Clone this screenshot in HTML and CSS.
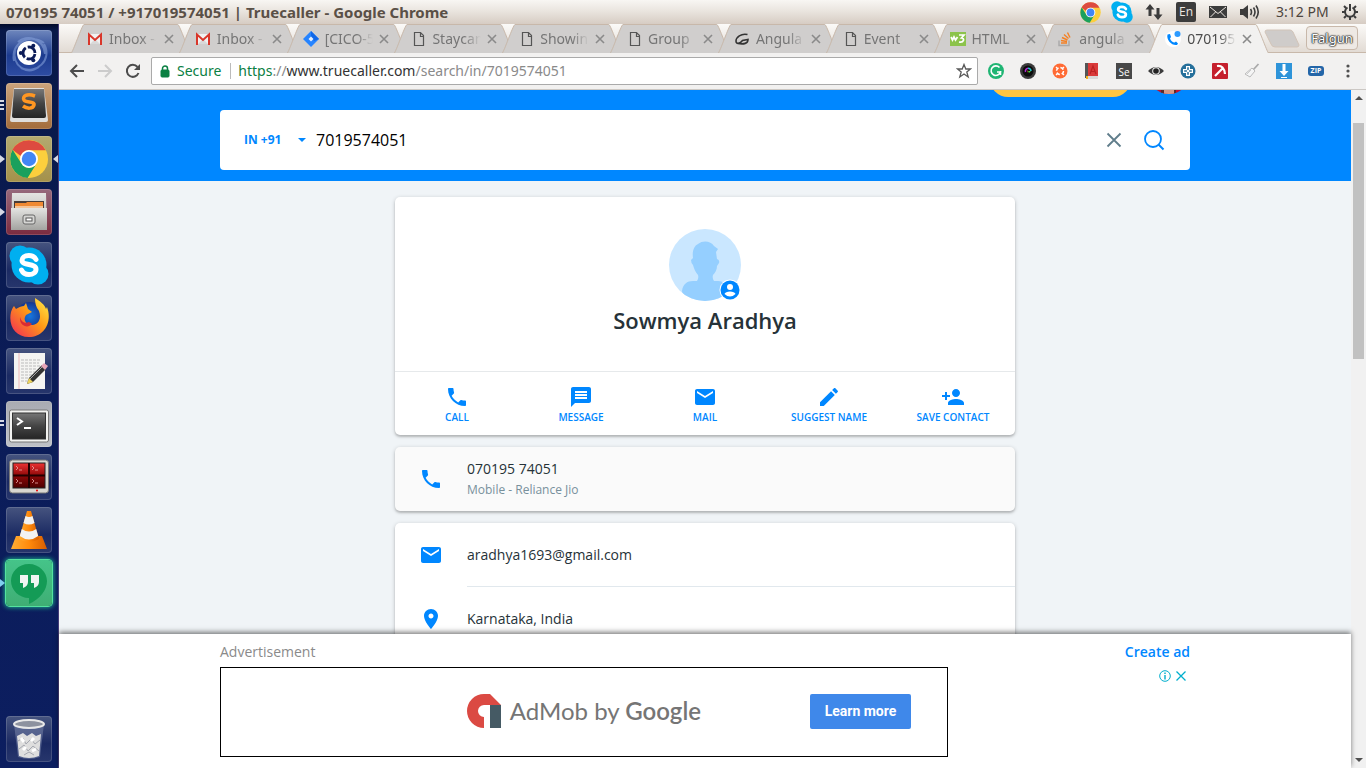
FILE: index.html
```
<!DOCTYPE html>
<html lang="en">
<head>
<meta charset="utf-8">
<title>070195 74051 / +917019574051 | Truecaller</title>
<link rel="stylesheet" href="styles.css">
</head>
<body>
<svg class="defs" aria-hidden="true">
  <defs>
    <linearGradient id="gGrey" x1="0" y1="0" x2="0" y2="1"><stop offset="0" stop-color="#e4e4e2"/><stop offset="1" stop-color="#a3a3a0"/></linearGradient>
    <linearGradient id="gDark" x1="0" y1="0" x2="0" y2="1"><stop offset="0" stop-color="#777"/><stop offset=".5" stop-color="#444"/><stop offset="1" stop-color="#252525"/></linearGradient>
    <linearGradient id="gRed" x1="0" y1="0" x2="0" y2="1"><stop offset="0" stop-color="#e33"/><stop offset=".5" stop-color="#8d0808"/><stop offset="1" stop-color="#4c0000"/></linearGradient>
    <linearGradient id="gFox" x1="1" y1="0" x2="0" y2="1"><stop offset="0" stop-color="#fff04a"/><stop offset=".45" stop-color="#ff9a16"/><stop offset="1" stop-color="#f0245a"/></linearGradient>
    <radialGradient id="gGlobe"><stop offset="0" stop-color="#1677e0"/><stop offset="1" stop-color="#15358f"/></radialGradient>
    <linearGradient id="gCone" x1="0" y1="0" x2="1" y2="0"><stop offset="0" stop-color="#ffae35"/><stop offset=".5" stop-color="#ff8a0c"/><stop offset="1" stop-color="#d55c00"/></linearGradient>
  </defs>
  <symbol id="chrome" viewBox="0 0 40 40">
    <circle cx="20" cy="20" r="19.500" fill="#fccf3d"/>
    <path d="M3 10.500A19.500 19.500 0 0 1 37 10.800L37 11H20A9 9 0 0 0 11.500 17Z" fill="#dd4b40"/>
    <path d="M3.200 10.500A19.500 19.500 0 0 0 18.500 39.500L27.500 25A9 9 0 0 1 12.200 24.500Z" fill="#1aa05d"/>
    <circle cx="20" cy="20" r="9.200" fill="#fff"/><circle cx="20" cy="20" r="7.400" fill="#4286f5"/>
  </symbol>
  <symbol id="skype" viewBox="0 0 40 40">
    <circle cx="20" cy="20" r="17.500" fill="#00aff0"/><circle cx="11" cy="11" r="10.500" fill="#00aff0"/><circle cx="29" cy="29" r="10.500" fill="#00aff0"/>
    <path d="M27 14.500C25.500 11.500 23 10.500 19.800 10.500C15.500 10.500 13 12.600 13 15.300C13 21.300 27 17.800 27 24.200C27 27.500 24 29.500 20 29.500C16.300 29.500 13.800 28 12.500 25" fill="none" stroke="#fff" stroke-width="5" stroke-linecap="round"/>
  </symbol>
  <symbol id="gmail" viewBox="0 0 16 16"><path d="M1 3H15V13H1Z" fill="#f1f1f1"/><path d="M3 13L8 8L13 13Z" fill="#d9d9d9"/><path d="M2 14V3.500L8 9L14 3.500V14" fill="none" stroke="#d9372b" stroke-width="2"/></symbol>
  <symbol id="file" viewBox="0 0 16 16"><path d="M4.500 1.500H10.500L13.500 4.500V14.500H4.500ZM10.500 1.500V5.500H13.500" fill="none" stroke="#555" stroke-width="1.200"/></symbol>
  <symbol id="x" viewBox="0 0 10 10"><path d="M1 1L9 9M9 1L1 9" stroke="currentColor" stroke-width="1.600"/></symbol>
  <symbol id="tabshape" viewBox="0 0 120 29" preserveAspectRatio="none"><path d="M0 29.500C2 28 11 1 13 .5H107C109 1 118 28 120 29.500" fill="currentColor" stroke="#c8b8aa"/></symbol>
  <symbol id="phone" viewBox="0 0 24 24"><path fill="currentColor" d="M6.620 10.790c1.440 2.830 3.760 5.140 6.590 6.590l2.200-2.200c.27-.27.670-.36 1.020-.24 1.120.37 2.330.57 3.570.57.550 0 1 .45 1 1V20c0 .55-.45 1-1 1-9.390 0-17-7.610-17-17 0-.55.45-1 1-1h3.500c.55 0 1 .45 1 1 0 1.250.2 2.450.57 3.570.11.35.03.74-.25 1.020l-2.200 2.200z"/></symbol>
  <symbol id="mail" viewBox="0 0 24 24"><path fill="currentColor" d="M20 4H4c-1.100 0-1.990.9-1.990 2L2 18c0 1.100.9 2 2 2h16c1.100 0 2-.9 2-2V6c0-1.100-.9-2-2-2zm0 4l-8 5-8-5V6l8 5 8-5v2z"/></symbol>
</svg>

<header class="panel">
  <h1 class="panel-title">070195 74051 / +917019574051 | Truecaller - Google Chrome</h1>
  <div class="indicators">
    <span class="ind"><svg width="21" height="21"><use href="#chrome"/></svg></span>
    <span class="ind"><svg width="22" height="22"><use href="#skype"/></svg></span>
    <span class="ind"><svg width="18" height="18" viewBox="0 0 18 18"><path d="M5 1L0.500 6.500H3.500V13H6.500V6.500H9.500ZM13 17L8.500 11.500H11.500V5H14.500V11.500H17.500Z" fill="#3c3c3c"/></svg></span>
    <span class="ind"><span class="lang">En</span></span>
    <span class="ind"><svg width="18" height="12" viewBox="0 0 18 12"><rect width="18" height="12" fill="#3c3c3c"/><path d="M1 1L9 7.500L17 1M1.500 11L6.500 6M16.500 11L11.500 6" fill="none" stroke="#eee8e2"/></svg></span>
    <span class="ind"><svg width="20" height="16" viewBox="0 0 20 16"><path d="M0 5H3L8 1V15L3 11H0Z" fill="#3c3c3c"/><path d="M10.500 5Q12.500 8 10.500 11M13.500 3.500Q16.500 8 13.500 12.500M16 1.500Q20.500 8 16 14.500" fill="none" stroke="#3c3c3c" stroke-width="1.600"/></svg></span>
    <time class="clock">3:12 PM</time>
    <span class="ind"><svg width="18" height="18" viewBox="0 0 18 18"><path d="M6.500 4.500A5 5 0 1 0 11.500 4.500" fill="none" stroke="#3c3c3c" stroke-width="2"/><path d="M9 1V8M1 9H4M14 9H17M3 3L5 5M15 3L13 5M3 15L5 13M15 15L13 13M9 14V17" stroke="#3c3c3c" stroke-width="2"/></svg></span>
  </div>
</header>

<div class="desktop">
  <nav class="dock" aria-label="Launcher">
    <button class="app ubuntu" aria-label="Dash"><svg viewBox="0 0 46 46"><path d="M8 31C4 12 25 3 38 13M38 14C47 30 30 45 15 38M12 12C20 4 38 8 39 24M33 37C20 46 6 35 9 20" fill="none" stroke="#8ba5df" stroke-width="2" opacity=".55"/><circle cx="23" cy="23" r="12" fill="#fff"/><circle cx="23" cy="23" r="6" fill="none" stroke="#0c1c58" stroke-width="2.800" stroke-dasharray="10.600 2" stroke-dashoffset="-1"/><circle cx="14.800" cy="23" r="2" fill="#0c1c58"/><circle cx="27.300" cy="15.800" r="2" fill="#0c1c58"/><circle cx="27.300" cy="30.200" r="2" fill="#0c1c58"/></svg></button>
    <button class="app sublime" aria-label="Sublime Text"><span class="mark-lines three"></span><svg viewBox="0 0 46 46"><path d="M8 5H38L42 37Q42 39 40 39H6Q4 39 4 37Z" fill="#dfdedc"/><path d="M8 6H38L40 33Q40 35 38 35H8Q6 35 6 33Z" fill="url(#gDark)"/><path d="M29 13C21 10 16 13 18 17C20 20 29 18 28 22C27 26 21 26 17 23" fill="none" stroke="#ff9722" stroke-width="3.500"/></svg></button>
    <button class="app chrome" aria-label="Google Chrome"><span class="mark-left"></span><span class="mark-right"></span><svg viewBox="0 0 46 46"><use href="#chrome" x="3.500" y="3.500" width="39" height="39"/></svg></button>
    <button class="app files" aria-label="Files"><span class="mark-left"></span><svg viewBox="0 0 46 46"><path d="M6 4H40L41 41H5Z" fill="url(#gGrey)"/><path d="M8 12H38V20H8Z" fill="#4a3d38"/><path d="M9 14L20 14L21 13H37V20H9Z" fill="#f08a34"/><path d="M9 17H37V20H9Z" fill="#f5c498"/><path d="M5 19H41V41H5Z" fill="url(#gGrey)"/><rect x="17" y="26" width="12" height="9" rx="2" fill="#d5d5d3" stroke="#666"/><rect x="20" y="29" width="6" height="3" fill="#fff" stroke="#555"/></svg></button>
    <button class="app" aria-label="Skype"><svg viewBox="0 0 46 46"><use href="#skype" x="3" y="3" width="40" height="40"/></svg></button>
    <button class="app" aria-label="Firefox"><svg viewBox="0 0 46 46"><circle cx="24" cy="21" r="14" fill="url(#gGlobe)"/><path d="M5 17C6 14 7 12 8 11L10 14C13 12 16 11 18 11L20 8L22 14L26 17L20 20C17 24 19 29 25 30C32 30 36 24 33 16C31 13 29 10 29 3C34 6 39 10 40 14L41 12C47 28 37 42 23 42C9 42 2 30 5 17Z" fill="url(#gFox)"/><path d="M14 22C15 27 19 29 23 27L26 29C22 34 13 31 14 22Z" fill="#d92b34"/></svg></button>
    <button class="app" aria-label="Text Editor"><svg viewBox="0 0 46 46"><rect x="8" y="5" width="31" height="36" fill="#f4f4f2"/><path d="M13 5V41" stroke="#edb9b9"/><path d="M15 12H35M15 15H33M15 18H35M15 21H31M15 24H34M15 27H29M15 30H30M15 33H23" stroke="#bbb" stroke-dasharray="3 1"/><path d="M21 36L23 30L36 17L40 21L27 34Z" fill="#333"/><path d="M24 31L36 19" stroke="#aaa"/><path d="M35 18L38 15L42 18L39 22Z" fill="#e7a5b8"/><path d="M21 36L23 30L27 34Z" fill="#ead25c"/></svg></button>
    <button class="app terminal" aria-label="Terminal"><span class="mark-lines two"></span><svg viewBox="0 0 46 46"><rect x="3.500" y="9" width="39" height="32" rx="2" fill="#f2f2f0" stroke="#777"/><rect x="6.500" y="12" width="33" height="26" fill="url(#gDark)" stroke="#333"/><path d="M11 17L16 20.500L11 24" fill="none" stroke="#fff" stroke-width="2"/><path d="M18 27H25" stroke="#fff" stroke-width="2"/></svg></button>
    <button class="app" aria-label="Terminator"><svg viewBox="0 0 46 46"><rect x="3.500" y="6" width="39" height="33" rx="3" fill="#d9d7d0" stroke="#777"/><rect x="7" y="9" width="32" height="25" fill="url(#gRed)" stroke="#222"/><path d="M23 9V34M7 21.500H39" stroke="#200" stroke-width="2"/><path d="M10 12L12 14L10 16M13 16H16M26 12L28 14L26 16M29 16H32M10 25L12 27L10 29M13 29H16M26 25L28 27L26 29M29 29H32" fill="none" stroke="#eaa" stroke-width=".8"/><circle cx="31" cy="36.500" r="1" fill="#e00"/></svg></button>
    <button class="app" aria-label="VLC"><svg viewBox="0 0 46 46"><path d="M10 29H36L41 42H5Z" fill="url(#gCone)"/><path d="M21 4H25L33 32Q23 38 13 32Z" fill="url(#gCone)"/><path d="M19.500 9Q23 11 26.500 9L28.500 16Q23 19 17.500 16ZM15.800 22Q23 27 30.200 22L32.200 29Q23 36 13.800 29Z" fill="#f2f2f2"/></svg></button>
    <button class="app hangouts" aria-label="Hangouts"><span class="mark-left"></span><svg viewBox="0 0 46 46"><path d="M23 4C12 4 5 12 5 21C5 30 13 38 23 38V44C34 39 41 30 41 21C41 12 33 4 23 4Z" fill="#149b56"/><path d="M14 15H22V22C22 25 20 27 17 28V23H14ZM25 15H33V22C33 25 31 27 28 28V23H25Z" fill="#f2f5f3"/></svg></button>
    <button class="app trash" aria-label="Trash"><svg viewBox="0 0 46 46"><path d="M8 8L12 41Q23 45 34 41L38 8Z" fill="#8995b5" opacity=".45"/><path d="M11 20L17 17L21 20L26 17L30 20L35 18L33 40Q23 44 13 40Z" fill="#dedede"/><path d="M12 25L17 22L20 28L25 23L29 28L34 24M13 33L18 29L22 35L27 30L33 35M18 39L23 36L28 39" fill="none" stroke="#a5a8b0"/><path d="M15 22L18 26M25 25L28 22M17 34L20 31M26 35L30 33" stroke="#fff" stroke-width="3"/><ellipse cx="23" cy="8" rx="15" ry="4" fill="#8d929f" stroke="#e9e9e9" stroke-width="2"/></svg></button>
  </nav>

  <main class="browser">
    <div class="tabstrip">
      <div class="tabs">
        <div class="tab"><svg class="tab-bg"><use href="#tabshape"/></svg><svg class="fav"><use href="#gmail"/></svg><span class="tab-title">Inbox - f</span><button class="tab-x" aria-label="Close tab"><svg><use href="#x"/></svg></button></div>
        <div class="tab"><svg class="tab-bg"><use href="#tabshape"/></svg><svg class="fav"><use href="#gmail"/></svg><span class="tab-title">Inbox - f</span><button class="tab-x" aria-label="Close tab"><svg><use href="#x"/></svg></button></div>
        <div class="tab"><svg class="tab-bg"><use href="#tabshape"/></svg><svg class="fav" viewBox="0 0 16 16"><path d="M8 0L16 8L8 16L0 8Z" fill="#2684ff"/><path d="M8 0L16 8L11 10L8 5Z" fill="#1168e8"/><path d="M8 5.500L10.500 8L8 10.500L5.500 8Z" fill="#e6effc"/></svg><span class="tab-title">[CICO-5]</span><button class="tab-x" aria-label="Close tab"><svg><use href="#x"/></svg></button></div>
        <div class="tab"><svg class="tab-bg"><use href="#tabshape"/></svg><svg class="fav"><use href="#file"/></svg><span class="tab-title">Staycan</span><button class="tab-x" aria-label="Close tab"><svg><use href="#x"/></svg></button></div>
        <div class="tab"><svg class="tab-bg"><use href="#tabshape"/></svg><svg class="fav"><use href="#file"/></svg><span class="tab-title">Showin</span><button class="tab-x" aria-label="Close tab"><svg><use href="#x"/></svg></button></div>
        <div class="tab"><svg class="tab-bg"><use href="#tabshape"/></svg><svg class="fav"><use href="#file"/></svg><span class="tab-title">Group</span><button class="tab-x" aria-label="Close tab"><svg><use href="#x"/></svg></button></div>
        <div class="tab"><svg class="tab-bg"><use href="#tabshape"/></svg><svg class="fav" viewBox="0 0 16 16"><path d="M13.500 3.500C7 2 2 6.500 2 10C2 13.500 6 13 8.500 9.500L14 8.500C14 12.500 10 13.500 4 12.500" fill="none" stroke="#333" stroke-width="1.600"/></svg><span class="tab-title">Angula</span><button class="tab-x" aria-label="Close tab"><svg><use href="#x"/></svg></button></div>
        <div class="tab"><svg class="tab-bg"><use href="#tabshape"/></svg><svg class="fav"><use href="#file"/></svg><span class="tab-title">Event</span><button class="tab-x" aria-label="Close tab"><svg><use href="#x"/></svg></button></div>
        <div class="tab"><svg class="tab-bg"><use href="#tabshape"/></svg><svg class="fav" viewBox="0 0 16 16"><rect y="1" width="16" height="14" fill="#8cc34b"/><path d="M1 6L2.500 9L4 6L5.500 9L7.500 6M9 4H14L11.500 7C15 7 14 12 9 11" fill="none" stroke="#fff" stroke-width="1.700"/></svg><span class="tab-title">HTML</span><button class="tab-x" aria-label="Close tab"><svg><use href="#x"/></svg></button></div>
        <div class="tab"><svg class="tab-bg"><use href="#tabshape"/></svg><svg class="fav" viewBox="0 0 16 16"><path d="M2 9.500V14.500H12V9.500" fill="none" stroke="#aaa" stroke-width="1.500"/><path d="M4 12H10M4 9.500L10 10.500M5 6.500L10.500 9M7 3.500L11.500 7.500M10.500 1.500L13 6.500" stroke="#f48024" stroke-width="1.400"/></svg><span class="tab-title">angula</span><button class="tab-x" aria-label="Close tab"><svg><use href="#x"/></svg></button></div>
        <div class="tab active"><svg class="tab-bg"><use href="#tabshape"/></svg><svg class="fav" viewBox="0 0 16 16"><circle cx="8" cy="8" r="8" fill="#fff"/><path d="M2.500 3.500L5 3L6 6L5 7.500C6 10 8 11.500 9.500 11.500L11 10.500L13 12.500L12 14C7 15 1 9 2.500 3.500Z" fill="#0087ff"/><circle cx="12.500" cy="3" r="3" fill="#2d9bff"/></svg><span class="tab-title">070195</span><button class="tab-x" aria-label="Close tab"><svg><use href="#x"/></svg></button></div>
      </div>
      <button class="new-tab" aria-label="New tab"><svg width="36" height="19" viewBox="0 0 36 19"><path d="M3 1H26Q28 1 29 3L35 16Q35 18 33 18H11Q8 18 7 15L1 3Q1 1 3 1Z" fill="#cfccca" stroke="#d2c4b8"/></svg></button>
      <button class="profile">Falgun</button>
    </div>

    <div class="toolbar">
      <button class="nav" aria-label="Back"><svg viewBox="0 0 16 16"><path d="M15 8H2M8 2L2 8L8 14" fill="none" stroke="#4c4c4c" stroke-width="2"/></svg></button>
      <button class="nav" aria-label="Forward"><svg viewBox="0 0 16 16"><path d="M1 8H14M8 2L14 8L8 14" fill="none" stroke="#ccc" stroke-width="2"/></svg></button>
      <button class="nav" aria-label="Reload"><svg viewBox="0 0 16 16"><path d="M13.500 10A6 6 0 1 1 12.500 4" fill="none" stroke="#4c4c4c" stroke-width="2"/><path d="M15 1V7H9Z" fill="#4c4c4c"/></svg></button>
      <div class="omnibox">
        <svg width="10" height="13" viewBox="0 0 10 13"><rect x="1" y="5" width="8" height="7" rx="1" fill="#0b8043" stroke="#0b8043"/><path d="M2.500 6V3.500A2.500 2.500 0 0 1 7.500 3.500V6" fill="none" stroke="#0b8043" stroke-width="1.500"/></svg>
        <span class="secure">Secure</span>
        <span class="url"><span class="scheme">https</span>://<span class="host">www.truecaller.com</span>/search/in/7019574051</span>
        <button class="star" aria-label="Bookmark"><svg width="16" height="16" viewBox="0 0 16 16"><path d="M8 1.500L9.800 6H14.500L10.800 9L12.200 14L8 11L3.800 14L5.200 9L1.500 6H6.200Z" fill="none" stroke="#5a5a5a" stroke-width="1.300"/></svg></button>
      </div>
      <div class="extensions">
        <button class="ext" aria-label="Grammarly"><svg viewBox="0 0 16 16"><circle cx="8" cy="8" r="8" fill="#1fb573"/><path d="M11.500 4.500A4.800 4.800 0 1 0 12.500 9H9M12.500 8V12" fill="none" stroke="#fff" stroke-width="1.600"/></svg></button>
        <button class="ext" aria-label="Camera"><svg viewBox="0 0 16 16"><circle cx="8" cy="8" r="8" fill="#3a3a3a"/><circle cx="8" cy="8" r="5.500" fill="#0c0c0c"/><path d="M5.500 9A3 3 0 0 1 8 5.200" stroke="#b02bd0" stroke-width="1.500" fill="none"/><path d="M8 5.200A3 3 0 0 1 11 8" stroke="#21c5ce" stroke-width="1.500" fill="none"/><path d="M8 8H11L9 10Z" fill="#48d33e"/><path d="M7 7L8 8V10Z" fill="#e63"/></svg></button>
        <button class="ext" aria-label="Helper"><svg viewBox="0 0 16 16"><circle cx="8" cy="8" r="7.500" fill="#ff6b35"/><circle cx="8" cy="8" r="3.500" fill="none" stroke="#fff" stroke-width="1.500" stroke-dasharray="3.500 2"/><path d="M4 4L6 6M12 4L10 6M4 12L6 10M12 12L10 10" stroke="#fff" stroke-width="1.300"/><circle cx="8" cy="8" r="2" fill="#ff6b35"/></svg></button>
        <button class="ext" aria-label="Dictionary"><svg viewBox="0 0 16 16"><path d="M1 0H14V14H1Z" fill="#d93a3a"/><path d="M1 0H4V15H1Z" fill="#555"/><path d="M3 13H14V16H3Z" fill="#d9d9d9"/><path d="M6 11L9 3L12 11M7.500 8.500H11" fill="none" stroke="#b22" stroke-width="1.200"/><path d="M2 13H4V16H2Z" fill="#f5b31c"/></svg></button>
        <button class="ext se" aria-label="Selenium">Se</button>
        <button class="ext" aria-label="Eye"><svg viewBox="0 0 16 16"><path d="M0 8Q8 0 16 8Q8 16 0 8Z" fill="#3c3c3c"/><circle cx="8" cy="8" r="3.800" fill="#eee"/><circle cx="8" cy="8" r="2.800" fill="#222"/></svg></button>
        <button class="ext" aria-label="Target"><svg viewBox="0 0 16 16"><circle cx="8" cy="8" r="7.500" fill="#26709b"/><path d="M6 3H10V6H13V10H10V13H6V10H3V6H6Z" fill="#fff"/><path d="M7.200 4.200H8.800V7.200H11.800V8.800H8.800V11.800H7.200V8.800H4.200V7.200H7.200Z" fill="#26709b"/><circle cx="8" cy="8" r="1.200" fill="#fff"/></svg></button>
        <button class="ext" aria-label="Pickaxe"><svg viewBox="0 0 16 16"><rect width="16" height="16" rx="1" fill="#c5202d"/><path d="M3 13L11 5M5 3Q12 2 13 11" fill="none" stroke="#fff" stroke-width="2.200"/></svg></button>
        <button class="ext" aria-label="Cleaner"><svg viewBox="0 0 16 16"><path d="M14.500 1L9 7" stroke="#aaa" stroke-width="1.800"/><path d="M8 5L11 8L6 14L1 11Z" fill="#f5f5f5" stroke="#bbb"/><path d="M3 11L7 7" stroke="#ccc"/></svg></button>
        <button class="ext" aria-label="Downloader"><svg viewBox="0 0 16 16"><rect width="16" height="16" fill="#2e94d9"/><path d="M6.500 1H9.500V8H12.500L8 13L3.500 8H6.500ZM5 14H11V15H5Z" fill="#fff"/></svg></button>
        <button class="ext zip" aria-label="Zip">ZIP</button>
        <button class="ext" aria-label="Menu"><svg viewBox="0 0 16 16"><circle cx="8" cy="3" r="1.600" fill="#505050"/><circle cx="8" cy="8" r="1.600" fill="#505050"/><circle cx="8" cy="13" r="1.600" fill="#505050"/></svg></button>
      </div>
    </div>

    <div class="view">
      <div class="page">
        <div class="content">
          <div class="hero">
            <div class="account"><span class="pill"></span><span class="me"><svg width="42" height="42" viewBox="0 0 42 42"><clipPath id="meClip"><circle cx="21" cy="21" r="21"/></clipPath><g clip-path="url(#meClip)"><rect width="42" height="42" fill="#c5102e"/><path d="M14 30H28V42H14Z" fill="#d69a88"/><path d="M13 30H16V42H13ZM26 30H28V42H26Z" fill="#5b2b28"/></g></svg></span></div>
            <form class="search">
              <select class="country" aria-label="Country"><option>IN +91</option></select>
              <svg class="caret" width="8" height="4" viewBox="0 0 8 4"><path d="M0 0H8L4 4Z" fill="#0087ff"/></svg>
              <input class="query" type="text" value="7019574051" aria-label="Phone number">
              <button class="icon-btn" type="reset" aria-label="Clear"><svg width="16" height="16" viewBox="0 0 16 16"><path d="M1.500 1.500L14.500 14.500M14.500 1.500L1.500 14.500" stroke="#607d8b" stroke-width="1.800"/></svg></button>
              <button class="icon-btn" type="submit" aria-label="Search"><svg width="22" height="22" viewBox="0 0 22 22"><circle cx="10" cy="10" r="8" fill="none" stroke="#0087ff" stroke-width="1.800"/><path d="M15.500 15.500L20.500 20.500" stroke="#0087ff" stroke-width="2"/></svg></button>
            </form>
          </div>
          <div class="results">
            <section class="card">
              <div class="who">
                <svg width="72" height="72" viewBox="0 0 72 72"><clipPath id="c"><circle cx="36" cy="36" r="36"/></clipPath><g clip-path="url(#c)"><rect width="72" height="72" fill="#cae7ff"/><path d="M13 62C14 55 18 52 24 52H28Q30 49 29 46C26 43 25 39 24 36Q22 34 22 31L24 29C23 22 25 17 29 15C34 11 42 12 45 17L49 20L47 23L48 30Q51 31 50 34L48 37C48 41 46 44 44 46Q43 49 45 52H49C55 52 58 56 59 62L57 72H15Z" fill="#95cfff"/></g><circle cx="61" cy="61" r="10.500" fill="#fff"/><circle cx="61" cy="61" r="9.500" fill="#0087ff"/><circle cx="61" cy="58" r="3" fill="#fff"/><path d="M55.500 65C56 61.500 66 61.500 66.500 65Q61 70 55.500 65Z" fill="#fff"/></svg>
                <h2 class="name">Sowmya Aradhya</h2>
              </div>
              <div class="actions">
                <button class="action"><svg><use href="#phone"/></svg>CALL</button>
                <button class="action"><svg viewBox="0 0 24 24"><path fill="currentColor" d="M20 2H4c-1.100 0-1.990.9-1.990 2L2 22l4-4h14c1.100 0 2-.9 2-2V4c0-1.100-.9-2-2-2zM6 6h12v2H6zM6 9h12v2H6zM6 12h12v2H6z" fill-rule="evenodd"/></svg>MESSAGE</button>
                <button class="action"><svg><use href="#mail"/></svg>MAIL</button>
                <button class="action"><svg viewBox="0 0 24 24"><path fill="currentColor" d="M3 17.250V21h3.750L17.810 9.940l-3.750-3.750L3 17.250zM20.710 7.040c.39-.39.39-1.020 0-1.410l-2.340-2.340c-.39-.39-1.020-.39-1.410 0l-1.830 1.830 3.750 3.750 1.830-1.830z"/></svg>SUGGEST NAME</button>
                <button class="action"><svg viewBox="0 0 24 24"><path fill="currentColor" d="M15 12c2.210 0 4-1.790 4-4s-1.790-4-4-4-4 1.790-4 4 1.790 4 4 4zm-9-2V7H4v3H1v2h3v3h2v-3h3v-2H6zm9 4c-2.670 0-8 1.340-8 4v2h16v-2c0-2.660-5.330-4-8-4z"/></svg>SAVE CONTACT</button>
              </div>
            </section>
            <section class="card tinted">
              <div class="row"><svg><use href="#phone"/></svg><div class="row-body"><span>070195 74051</span><small>Mobile - Reliance Jio</small></div></div>
            </section>
            <section class="card">
              <div class="row"><svg><use href="#mail"/></svg><div class="row-body lined">aradhya1693@gmail.com</div></div>
              <div class="row"><svg viewBox="0 0 24 24"><path fill="currentColor" d="M12 2C8.130 2 5 5.130 5 9c0 5.250 7 13 7 13s7-7.750 7-13c0-3.870-3.130-7-7-7zm0 9.500c-1.380 0-2.500-1.120-2.500-2.500s1.120-2.500 2.500-2.500 2.500 1.120 2.500 2.500-1.120 2.500-2.500 2.500z"/></svg><div class="row-body">Karnataka, India</div></div>
            </section>
          </div>
        </div>
        <aside class="ad">
          <div class="ad-inner">
            <div class="ad-head"><span>Advertisement</span><a class="create" href="#">Create ad</a></div>
            <div class="ad-row">
              <div class="banner">
                <div class="brand"><svg width="34" height="34" viewBox="0 0 34 34"><path d="M17 0H23L34 11H17A5.500 5.500 0 0 0 17 23V34A17 17 0 0 1 17 0Z" fill="#db4a43"/><path d="M23 11H34V34H23Z" fill="#455a64"/></svg><span>AdMob by <b>Google</b></span></div>
                <button class="learn">Learn more</button>
              </div>
              <div class="ad-choices"><svg width="12" height="12" viewBox="0 0 12 12"><circle cx="6" cy="6" r="5.300" fill="none" stroke="#00aecd"/><path d="M6 5V9.500M6 2.500V4" stroke="#00aecd" stroke-width="1.400"/></svg><svg width="12" height="12" viewBox="0 0 12 12"><path d="M1.500 1.500L10.500 10.500M10.500 1.500L1.500 10.500" stroke="#00aecd" stroke-width="1.300"/></svg></div>
            </div>
          </div>
        </aside>
      </div>
      <div class="scrollbar"><span class="up"></span><span class="thumb"></span><span class="down"></span></div>
    </div>
  </main>
</div>
</body>
</html>
```

FILE: styles.css
```
* { box-sizing: border-box; }
body { margin: 0; height: 100vh; display: flex; flex-direction: column; overflow: hidden; font-family: "Open Sans", "Noto Sans", sans-serif; font-size: 14px; color: #263238; }
button { border: 0; padding: 0; margin: 0; background: none; font: inherit; color: inherit; }
svg { display: block; flex: none; }
.defs { position: absolute; width: 0; height: 0; }

.panel { height: 24px; flex: none; display: flex; align-items: center; justify-content: space-between; background: linear-gradient(#f8f6f3, #eae5df 45%, #d6ccc3); }
.panel-title { margin: 0; padding-left: 6px; font: bold 15px/24px "Noto Sans", sans-serif; color: #5a5047; white-space: nowrap; }
.indicators { display: flex; align-items: center; }
.ind { width: 32px; display: flex; justify-content: center; }
.lang { width: 20px; height: 20px; border-radius: 2px; background: #3c3c3c; color: #eee8e2; font-size: 12px; line-height: 20px; text-align: center; }
.clock { width: 68px; padding-left: 10px; font: 14px/24px "Noto Sans", sans-serif; color: #4d453e; white-space: nowrap; }

.desktop { flex: 1; min-height: 0; display: flex; }
.dock { width: 59px; flex: none; display: flex; flex-direction: column; align-items: center; gap: 7px; padding: 6px 1px 6px 0; background: linear-gradient(#020b2b, #081848 6px, #0b1c58 50%, #0c1e60); border-right: 1px solid #453c78; }
.app { position: relative; width: 46px; height: 46px; flex: none; border-radius: 4px; background: linear-gradient(#46547f, #1b2a63 60%, #27366c); box-shadow: inset 0 0 0 1px rgba(255,255,255,.15); }
.app svg { width: 46px; height: 46px; }
.ubuntu { background: linear-gradient(#6f87bd, #1c3b8f 55%, #2e4ca2); }
.sublime { background: linear-gradient(#cba47d, #a36c3b); }
.chrome { background: linear-gradient(#b3aa70, #a4914a); }
.files { background: linear-gradient(#96697c, #7c2b3f); }
.terminal { background: linear-gradient(#a9abb2, #bfc1c7); }
.hangouts { background: linear-gradient(#45c489, #3fae74); box-shadow: 0 0 0 1px #54e39f, 0 0 4px 2px #1b9a86; }
.trash { margin-top: auto; }
.mark-left { position: absolute; left: -6px; top: 19px; border: solid transparent; border-width: 4px 0 4px 5px; border-left-color: #d5d9e5; }
.mark-right { position: absolute; right: -6px; top: 19px; border: solid transparent; border-width: 4px 5px 4px 0; border-right-color: #d5d9e5; }
.mark-lines { position: absolute; left: -6px; width: 4px; background: repeating-linear-gradient(#d5d9e5 0 2px, transparent 2px 4px); }
.three { top: 17px; height: 10px; }
.two { top: 19px; height: 6px; }
.hangouts .mark-left { border-left-color: #7fd0ee; }

.browser { flex: 1; min-width: 0; display: flex; flex-direction: column; background: #f2f1f0; }
.tabstrip { height: 29px; flex: none; display: flex; align-items: center; padding: 0 8px 0 12px; background: linear-gradient(#fbfaf8, #e2dbd4); border-bottom: 1px solid #c8b8aa; font-family: "Noto Sans", sans-serif; }
.tabs { flex: 1; min-width: 0; height: 29px; display: flex; margin-bottom: -1px; }
.tab { position: relative; flex: 1; min-width: 0; display: flex; align-items: center; gap: 6px; padding: 0 17px 0 16px; margin-left: -12px; color: #d0cecd; }
.tab:first-child { margin-left: 0; }
.tab.active { color: #f2f1f0; z-index: 1; }
.tab-bg { position: absolute; left: 0; top: 0; width: 100%; height: 29px; }
.fav { position: relative; width: 16px; height: 16px; }
.tab-title { position: relative; flex: 1; min-width: 0; overflow: hidden; white-space: nowrap; font-size: 14px; line-height: 28px; color: #757575; mask-image: linear-gradient(90deg, #000 65%, transparent); }
.active .tab-title { color: #4c4c4c; }
.tab-x { position: relative; color: #8a8a8a; }
.tab-x svg { width: 10px; height: 10px; }
.new-tab { margin-left: -5px; }
.profile { width: 52px; height: 24px; margin-left: 6px; border: 1px solid #c8b8aa; border-radius: 4px; background: #eee9e4; font-size: 13px; line-height: 22px; color: #fff; text-shadow: 0 0 1px #333, 0 0 1px #333, 0 0 2px #333, 0 0 2px #333, 0 0 1px #333; }

.toolbar { height: 37px; flex: none; display: flex; align-items: center; padding: 0 2px 0 4px; background: #f2f1f0; border-bottom: 1px solid #ccc8c4; }
.nav { width: 28px; height: 28px; flex: none; display: flex; align-items: center; justify-content: center; }
.nav svg { width: 16px; height: 16px; }
.omnibox { flex: 1; min-width: 0; height: 28px; display: flex; align-items: center; margin: 0 2px 0 4px; padding: 0 5px 0 8px; background: #fff; border: 1px solid #aaa; border-radius: 2px; font: 14px/24px "Noto Sans", sans-serif; }
.secure { margin-left: 7px; padding-right: 9px; line-height: 16px; border-right: 1px solid #bbb; color: #0b8043; }
.url { flex: 1; padding-left: 7px; color: #8a8a8a; white-space: nowrap; }
.scheme { color: #0b8043; }
.host { color: #333; }
.extensions { display: flex; }
.ext { width: 16px; height: 16px; margin: 0 8px; }
.ext svg { width: 16px; height: 16px; }
.se { background: #484848; color: #fff; font-size: 10px; line-height: 18px; }
.zip { height: 10px; margin: 3px 8px; border-radius: 3px; background: #2466a8; color: #fff; font: bold 7px/10px "Open Sans", sans-serif; }

.view { flex: 1; min-height: 0; display: flex; }
.page { flex: 1; min-width: 0; display: flex; flex-direction: column; }
.content { flex: 1; min-height: 0; overflow: hidden; background: #f0f4f7; }
.hero { padding: 0 16px 11px; background: #0087ff; }
.account { max-width: 970px; height: 20px; margin: 0 auto; display: flex; justify-content: flex-end; align-items: flex-end; gap: 17px; overflow: hidden; }
.pill { width: 141px; height: 36px; margin-bottom: 13px; border-radius: 18px; background: #ffc542; }
.me { margin-bottom: 16px; }
.search { max-width: 970px; height: 60px; margin: 0 auto; display: flex; align-items: center; padding: 0 16px 0 24px; background: #fff; border-radius: 4px; }
.country { width: 54px; border: 0; padding: 0; background: none; appearance: none; font: bold 12px/20px "Open Sans", sans-serif; color: #0087ff; }
.query { flex: 1; min-width: 0; margin-left: 10px; border: 0; padding: 0; background: none; outline: 0; font: 16px/24px "Open Sans", sans-serif; color: #000; }
.icon-btn { width: 40px; height: 40px; display: flex; align-items: center; justify-content: center; }

.results { max-width: 620px; margin: 16px auto 0; display: flex; flex-direction: column; gap: 12px; }
.card { background: #fff; border-radius: 5px; box-shadow: 0 1px 4px rgba(0,0,0,.2), 0 2px 2px rgba(0,0,0,.14); }
.tinted { background: #fafafa; }
.who { display: flex; flex-direction: column; align-items: center; padding: 32px 16px 36px; border-bottom: 1px solid #e6e9eb; }
.name { margin: 4px 0 0; font-size: 22px; font-weight: 600; line-height: 30px; }
.actions { display: grid; grid-template-columns: repeat(5, 1fr); }
.action { display: flex; flex-direction: column; align-items: center; padding: 13px 0 10px; font-size: 10px; font-weight: 600; line-height: 16px; color: #0087ff; }
.action svg, .row svg { width: 24px; height: 24px; color: #0087ff; }
.row { height: 64px; display: flex; align-items: center; gap: 24px; padding-left: 24px; }
.row-body { flex: 1; height: 64px; display: flex; flex-direction: column; justify-content: center; line-height: 20px; }
.row-body small { font-size: 12px; line-height: 21px; color: #78909c; }
.lined { border-bottom: 1px solid #e1e8ed; }

.ad { position: relative; flex: none; padding: 8px 16px 11px; background: #fff; box-shadow: 0 -2px 5px rgba(0,0,0,.5); }
.ad-inner { max-width: 970px; margin: 0 auto; }
.ad-head { display: flex; justify-content: space-between; line-height: 20px; padding-bottom: 5px; color: #8a8a8a; }
.create { color: #0087ff; font-weight: 600; text-decoration: none; }
.ad-row { display: flex; justify-content: space-between; align-items: flex-start; }
.banner { width: 728px; height: 90px; display: flex; align-items: center; justify-content: flex-end; padding: 0 36px 2px 0; border: 1px solid #000; background: #fff; }
.brand { display: flex; align-items: center; gap: 9px; margin-right: 109px; font: 24px/32px Lato, sans-serif; color: #757575; white-space: nowrap; }
.brand b { font-weight: 600; }
.learn { width: 101px; height: 35px; border-radius: 2px; background: #3f88ea; color: #fff; font: bold 14px/35px Roboto, sans-serif; }
.ad-choices { display: flex; gap: 4px; padding: 3px 3px 0 0; }

.scrollbar { width: 15px; flex: none; display: flex; flex-direction: column; align-items: center; padding: 6px 0 6px; background: #f1f1f1; }
.up { border: solid transparent; border-width: 0 4px 4px; border-bottom-color: #505050; }
.thumb { width: 11px; height: 236px; margin: 23px 0 auto; background: #c1c1c1; }
.down { border: solid transparent; border-width: 4px 4px 0; border-top-color: #505050; }
```
